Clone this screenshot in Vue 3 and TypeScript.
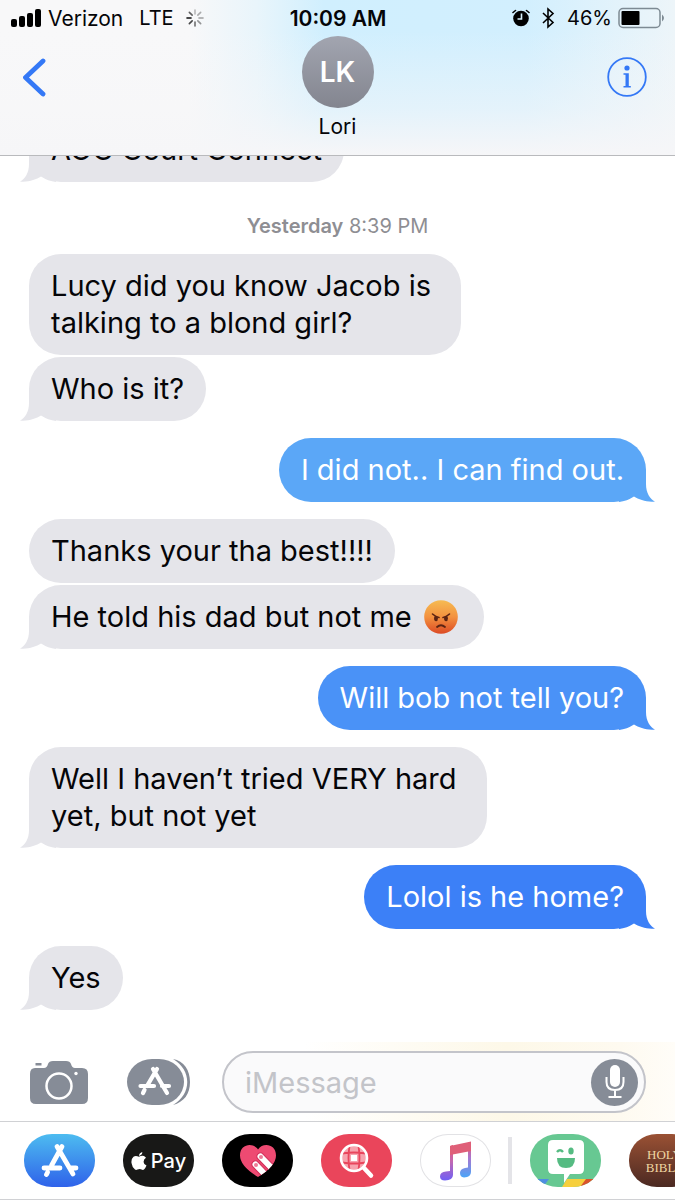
<script setup lang="ts">
type Side = 'in' | 'out'
interface Message { text: string; tone?: string; angry?: boolean }
interface Group { side: Side; messages: Message[] }

const earlier: Group[] = [{ side: 'in', messages: [{ text: 'AOC Court Connect' }] }]
const recent: Group[] = [
  { side: 'in', messages: [{ text: 'Lucy did you know Jacob is\ntalking to a blond girl?' }, { text: 'Who is it?' }] },
  { side: 'out', messages: [{ text: 'I did not.. I can find out.', tone: 'light' }] },
  { side: 'in', messages: [{ text: 'Thanks your tha best!!!!' }, { text: 'He told his dad but not me', angry: true }] },
  { side: 'out', messages: [{ text: 'Will bob not tell you?', tone: 'mid' }] },
  { side: 'in', messages: [{ text: 'Well I haven’t tried VERY hard\nyet, but not yet' }] },
  { side: 'out', messages: [{ text: 'Lolol is he home?', tone: 'deep' }] },
  { side: 'in', messages: [{ text: 'Yes' }] },
]
const sections = [
  { day: '', time: '', groups: earlier },
  { day: 'Yesterday', time: '8:39 PM', groups: recent },
]
const spokes = [0.25, 0.3, 0.35, 0.4, 0.55, 0.7, 0.95, 0.6]
</script>

<template>
  <div class="screen">
    <header class="top">
      <div class="status">
        <div class="status-side">
          <svg class="signal" width="30" height="18" viewBox="0 0 30 18" aria-hidden="true">
            <rect x="0" y="10" width="6" height="8" rx="2" /><rect x="8" y="7" width="6" height="11" rx="2" />
            <rect x="16" y="4" width="6" height="14" rx="2" /><rect x="24" y="0" width="6" height="18" rx="2" />
          </svg>
          <span class="carrier">Verizon</span>
          <span class="network">LTE</span>
          <svg width="18" height="18" viewBox="-9 -9 18 18" aria-hidden="true">
            <line v-for="(o, i) in spokes" :key="i" x1="0" y1="-4" x2="0" y2="-8" stroke="#000" stroke-width="1.6"
              stroke-linecap="round" :opacity="o" :transform="`rotate(${i * 45})`" />
          </svg>
        </div>
        <time class="clock">10:09 AM</time>
        <div class="status-side end">
          <svg class="alarm" width="18" height="18" viewBox="0 0 18 18" aria-hidden="true">
            <circle cx="9" cy="9.5" r="7.8" />
            <path d="M1 3.500 3.500 1.500M17 3.500 14.500 1.500" stroke="#000" stroke-width="1.600" stroke-linecap="round" />
            <path d="M9.5 4.5V10H5.5" stroke="#d8f0fc" stroke-width="1.6" fill="none" />
          </svg>
          <svg class="bluetooth" width="14" height="22" viewBox="0 0 14 22" aria-hidden="true">
            <path d="M2 6 12 15.5 7 20V2l5 4.5L2 16" fill="none" stroke="#000" stroke-width="1.6" />
          </svg>
          <span class="percent">46%</span>
          <svg width="47" height="22" viewBox="0 0 47 22" aria-hidden="true">
            <rect x="1" y="1.5" width="41" height="19" rx="4" fill="none" stroke="#7d8a93" stroke-width="1.5" />
            <rect x="3.5" y="4" width="18" height="14" rx="1" />
            <path d="M44 7.500q4 3.500 0 7z" fill="#7d8a93" />
          </svg>
        </div>
      </div>
      <div class="nav">
        <button class="back" type="button" aria-label="Back">
          <svg width="24" height="40" viewBox="0 0 24 40"><path d="M21 4 3.500 20.500 21 37" fill="none" stroke="#3478f6" stroke-width="4.800" stroke-linecap="round" stroke-linejoin="round" /></svg>
        </button>
        <div class="contact">
          <div class="avatar">LK</div>
          <h1 class="name">Lori</h1>
        </div>
        <button class="info" type="button" aria-label="Details">
          <svg width="40" height="40" viewBox="0 0 40 40">
            <circle cx="20" cy="20" r="18.800" fill="none" stroke="#3478f6" stroke-width="1.800" />
            <circle cx="20" cy="11" r="2.600" fill="#3478f6" />
            <path d="M16.500 16.300h5.300V29h2v1.500h-7.300V29h2V17.800h-2z" fill="#3478f6" />
          </svg>
        </button>
      </div>
    </header>

    <main class="scroller">
      <div class="thread">
        <section v-for="(s, si) in sections" :key="si" class="section">
          <p v-if="s.day" class="stamp"><b>{{ s.day }}</b> {{ s.time }}</p>
          <div v-for="(g, gi) in s.groups" :key="gi" class="group" :class="g.side">
            <div v-for="(m, mi) in g.messages" :key="mi" class="bubble" :class="[g.side, m.tone, { long: m.text.includes('\n') }]">
              <span>{{ m.text }}</span>
              <svg v-if="m.angry" class="emoji" width="36" height="36" viewBox="0 0 36 36" role="img" aria-label="Angry face">
                <defs>
                  <linearGradient id="rage" x1="0" y1="0" x2="0" y2="1">
                    <stop offset="0" stop-color="#f6bb52" /><stop offset=".5" stop-color="#f3913f" /><stop offset="1" stop-color="#dc4a24" />
                  </linearGradient>
                </defs>
                <circle cx="18" cy="18" r="16.800" fill="url(#rage)" />
                <path d="M9.500 15q3 2.800 6.500 3.500M26.500 15q-3 2.800-6.500 3.500" fill="none" stroke="#5c2413" stroke-width="1.600" stroke-linecap="round" />
                <ellipse cx="13" cy="19.500" rx="1.900" ry="2.800" fill="#5c2413" /><ellipse cx="23" cy="19.500" rx="1.900" ry="2.800" fill="#5c2413" />
                <path d="M14 28q4-3.600 8 0" fill="none" stroke="#5c2413" stroke-width="1.800" stroke-linecap="round" />
              </svg>
              <svg v-if="mi === g.messages.length - 1" class="tail" width="40" height="32" viewBox="0 0 40 32" aria-hidden="true">
                <path d="M9 0V14C9 23 5 29 0 31.500C8 32.500 16 29.500 21 26.500Q28 31 36 32L36 0z" />
              </svg>
            </div>
          </div>
        </section>
      </div>
    </main>

    <footer>
      <form class="composer" @submit.prevent>
        <button class="camera" type="button" aria-label="Camera">
          <svg width="58" height="44" viewBox="0 0 58 44">
            <path d="M5 8H14Q17 8 18 4Q19 1 23 1H36Q40 1 41 4Q42 8 45 8H52Q58 8 58 14V38Q58 44 52 44H6Q0 44 0 38V14Q0 8 5 8zM5.500 3H11.500V5.500H5.500z" fill="#868c97" />
            <circle cx="29" cy="26" r="12.500" fill="none" stroke="#fff" stroke-width="2.500" /><circle cx="46" cy="13.500" r="1.700" fill="#fff" />
          </svg>
        </button>
        <button class="drawer" type="button" aria-label="Apps">
          <svg width="63" height="48" viewBox="0 0 63 48">
            <path d="M46 1C57 3 63 12 63 24S57 44 46 47C65 36 65 12 46 1z" fill="#868c97" />
            <rect x="0" y="1" width="57" height="46" rx="25" ry="23" fill="#868c97" />
            <g stroke="#fff" stroke-width="4.200" stroke-linecap="round">
              <path d="M26 11 40 35M30 11 20 28M17.500 32 16 35M13.500 28H27M35 28H42" />
            </g>
          </svg>
        </button>
        <div class="field">
          <input type="text" aria-label="Message" placeholder="iMessage" />
          <button class="mic" type="button" aria-label="Dictate">
            <svg width="20" height="36" viewBox="0 0 20 36">
              <rect x="5" y="1" width="10" height="22" rx="5" fill="#fff" />
              <path d="M1.500 13V18Q1.500 26 10 26T18.500 18V13M10 26V33M3.500 33H16.500" fill="none" stroke="#fff" stroke-width="2" />
            </svg>
          </button>
        </div>
      </form>
      <nav class="apps" aria-label="iMessage apps">
        <button class="app store" type="button" aria-label="App Store">
          <svg width="38" height="36" viewBox="0 0 38 36" stroke="#fff" stroke-width="4.800" stroke-linecap="round">
            <path d="M16 3.500 32 31M21 3.500 10.500 22.500M6.500 29.500 5.500 31.500M3 25H19M28.500 25H35" />
          </svg>
        </button>
        <button class="app pay" type="button">
          <svg width="16" height="18" viewBox="0 0 16 18" aria-hidden="true">
            <path d="M8 4.800Q10 3.500 12 3.800T15 5.800Q12.500 7.500 12.600 10T15.500 13.500Q14.500 16 13 17.500Q12 18.300 10.500 17.500T6.500 17.500Q5 18.300 4 17.500Q1 15 .5 11Q0 7 2.500 4.800Q4.500 3 8 4.800zM8 4Q8 1 11.300 0Q11.500 3 8 4z" fill="#fff" />
          </svg>
          <span>Pay</span>
        </button>
        <button class="app touch" type="button" aria-label="Digital Touch">
          <svg width="38" height="34" viewBox="0 0 38 34">
            <defs><clipPath id="heart"><path d="M19 33Q1 22 1 11.500C1 0 14-2 19 5.500C24-2 37 0 37 11.500Q37 22 19 33z" /></clipPath></defs>
            <g clip-path="url(#heart)">
              <rect width="38" height="34" fill="#ee4a72" />
              <g fill="#fff" stroke="#d12d58"><rect x="18" y="9" width="7" height="32" rx="3.500" transform="rotate(-44 21.500 12.500)" /><rect x="13" y="17" width="7" height="32" rx="3.500" transform="rotate(-44 16.500 20.500)" /></g>
              <circle cx="22" cy="13" r="2" fill="#ee7c98" /><circle cx="17" cy="21" r="2" fill="#ee7c98" />
            </g>
          </svg>
        </button>
        <button class="app images" type="button" aria-label="Images">
          <svg width="36" height="36" viewBox="0 0 36 36">
            <circle cx="15" cy="15" r="13" fill="#f7a3ae" />
            <path d="M12 12H18V18H12z" fill="#fff" />
            <path d="M10.500 3Q8.500 15 10.500 27M19.500 3Q21.500 15 19.500 27M3 10.500Q15 8.500 27 10.500M3 19.500Q15 21.500 27 19.500" fill="none" stroke="#e9455c" stroke-width="1.800" />
            <circle cx="15" cy="15" r="13" fill="none" stroke="#fff" stroke-width="2.600" />
            <path d="M25 25 32 32.500" stroke="#fff" stroke-width="4.500" stroke-linecap="round" />
          </svg>
        </button>
        <button class="app music" type="button" aria-label="Music">
          <svg width="34" height="40" viewBox="0 0 34 40">
            <defs>
              <linearGradient id="na" x1="0" y1="0" x2="0" y2="1"><stop offset="0" stop-color="#e8566f" /><stop offset=".45" stop-color="#c368b0" /><stop offset="1" stop-color="#7060f5" /></linearGradient>
              <linearGradient id="nb" x1="0" y1="0" x2="0" y2="1"><stop offset="0" stop-color="#e8566f" /><stop offset=".45" stop-color="#a877d0" /><stop offset="1" stop-color="#4aa5f8" /></linearGradient>
            </defs>
            <path d="M11 5 14 4V34Q14 39 6 39.500Q1 39.500 1 35.500Q1 31 7 30.500L11 30z" fill="url(#na)" />
            <path d="M29 1.500 32 1V31Q32 36 25 36.500Q21 36 21 32Q21 28 26 27L29 26.500z" fill="url(#nb)" />
            <path d="M11 5 32 .5V10L11 14z" fill="#df5f78" />
          </svg>
        </button>
        <span class="divider" />
        <button class="app bitmoji" type="button" aria-label="Bitmoji">
          <svg width="71" height="53" viewBox="0 0 71 53">
            <path d="M0 45H19L13 53H0z" fill="#4f8ee0" /><path d="M37 45H57L51 53H32z" fill="#f6cf3c" /><path d="M56 45H71V53H50z" fill="#d9532c" />
            <path d="M23 6H49Q54 6 54 11V35Q54 40 49 40H40L34 49V40H23Q18 40 18 35V11Q18 6 23 6z" fill="#fff" />
            <path d="M27 24H45Q45 34 36 34T27 24z" fill="#55bb82" /><path d="M27 18Q30 14.500 33 18" stroke="#55bb82" stroke-width="2.500" fill="none" /><ellipse cx="41" cy="17" rx="2.700" ry="3.500" fill="#55bb82" />
          </svg>
        </button>
        <button class="app bible" type="button"><span>HOLY<br />BIBLE</span></button>
      </nav>
    </footer>
  </div>
</template>

<style>
body { margin: 0; }
</style>

<style scoped>
.screen { height: 100vh; display: flex; flex-direction: column; overflow: hidden; background: #fff; color: #050508; font-family: Inter, "Liberation Sans", sans-serif; }
button { border: 0; padding: 0; background: none; color: inherit; font-family: inherit; display: flex; align-items: center; justify-content: center; flex: none; }
svg { display: block; flex: none; }
.top { flex: none; height: 155px; border-bottom: 1px solid #b9babd; background: linear-gradient(to bottom, rgba(246, 246, 248, 0) 20%, rgba(246, 246, 248, 0.5) 70%, #f6f6f8 100%), linear-gradient(to right, #f8f8f9 28%, #e9f5fb 38%, #d0effe 48%, #d2effe 78%, #edf5f9 100%); }
.status { display: grid; grid-template-columns: 1fr auto 1fr; align-items: center; height: 36px; padding: 0 10px 0 11px; font-size: 20px; }
.status-side { display: flex; align-items: center; }
.end { justify-content: flex-end; }
.carrier { margin: 0 16px 0 7px; font-size: 21px; }
.network { margin-right: 12px; }
.clock { font-size: 21px; font-weight: 600; }
.bluetooth { margin: 0 12px 0 11px; }
.percent { margin-right: 6px; }
.nav { display: grid; grid-template-columns: 1fr auto 1fr; align-items: start; padding: 0 22px; }
.back, .info { margin-top: 21px; }
.back { justify-self: start; }
.info { justify-self: end; margin-right: 6px; }
.avatar { width: 72px; height: 72px; border-radius: 50%; background: linear-gradient(#a2a5b0, #83858f); color: #fff; display: flex; align-items: center; justify-content: center; font-size: 28px; font-weight: 600; }
.contact { display: flex; flex-direction: column; align-items: center; }
.name { margin: 6px 0 0; font-size: 21px; line-height: 26px; font-weight: 400; }
.scroller { flex: 1; min-height: 0; overflow-y: auto; scrollbar-width: none; display: flex; flex-direction: column-reverse; }
.thread { padding: 0 29px 32px; }
.section { display: flex; flex-direction: column; gap: 17px; }
.stamp { margin: 33px 0 0; text-align: center; color: #8e8e93; font-size: 20px; line-height: 22px; }
.stamp b { font-weight: 600; }
.group { display: flex; flex-direction: column; gap: 2px; align-items: flex-start; }
.group.out { align-items: flex-end; }
.bubble { position: relative; isolation: isolate; box-sizing: border-box; max-width: 80%; padding: 13px 22px 14px; border-radius: 32px; font-size: 29px; line-height: 37px; white-space: pre-line; display: flex; align-items: center; background: var(--tone); --tone: #e5e5ea; }
.bubble.long { padding-right: 30px; }
.bubble.out { color: #fff; }
.bubble.light { --tone: #5ba7f7; }
.bubble.mid { --tone: #4a92f7; }
.bubble.deep { --tone: #3c80f7; }
.emoji { margin: 0 3px 0 11px; }
.tail { position: absolute; z-index: -1; left: -9px; bottom: 0; fill: var(--tone); }
.out .tail { left: auto; right: -9px; transform: scaleX(-1); }
.composer { display: flex; align-items: center; padding: 9px 29px 8px 30px; background: linear-gradient(to right, #fff 45%, #fdf8e8 75%, #fefaf0 92%, #fffdf8 100%); }
.drawer { margin: 0 32px 0 39px; }
.field { flex: 1; min-width: 0; box-sizing: border-box; height: 62px; border: 2px solid #c3c4ca; border-radius: 31px; background: #fafafb; display: flex; align-items: center; padding: 0 6px 0 21px; }
.field input { flex: 1; min-width: 0; border: 0; outline: 0; padding: 0; background: none; font-family: inherit; font-size: 29px; }
.field input::placeholder { color: #c3c4c9; opacity: 1; }
.mic { width: 47px; height: 47px; border-radius: 50%; background: #868c97; }
.apps { display: flex; align-items: center; gap: 28px; padding: 12px 0 12px 24px; border-top: 1px solid #d0d1d4; border-bottom: 1px solid #d0d1d4; overflow: hidden; }
.app { width: 71px; height: 53px; border-radius: 28px / 26px; overflow: hidden; }
.store { background: linear-gradient(#4dbcf0, #2f62ea); }
.pay { background: #181817; color: #fff; gap: 4px; font-size: 20px; font-weight: 500; }
.touch { background: #000; }
.images { background: #ea455b; }
.music { box-sizing: border-box; border: 1px solid #e2e2e5; background: #fff; }
.divider { flex: none; width: 4px; height: 47px; margin: 0 -10px 0 -11px; background: #e4e4e8; }
.bitmoji { background: #67c892; }
.bible { background: linear-gradient(#9a5134, #4b2922); color: #efd6a2; font-family: "Liberation Serif", serif; font-size: 13px; line-height: 13px; text-align: center; }
</style>
